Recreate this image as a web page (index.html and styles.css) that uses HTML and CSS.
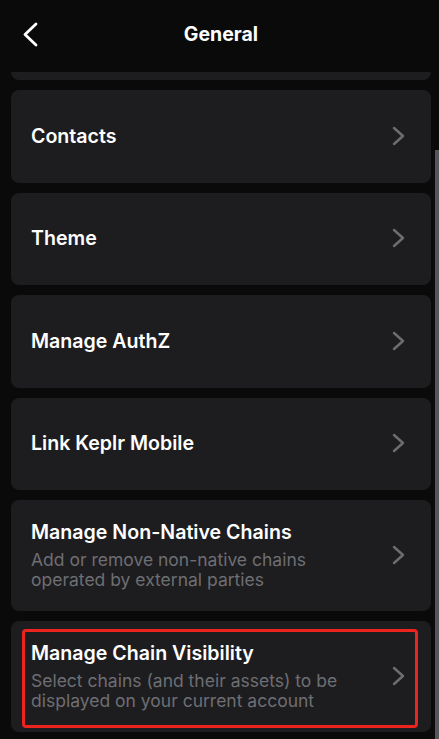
FILE: index.html
```html
<!DOCTYPE html>
<html>
<head>
    <title>General</title>
    <link rel="stylesheet" href="styles.css">
</head>
<body>
    <div class="page">
        <div class="header">
            <svg class="back" width="24" height="28" viewBox="0 0 24 28">
                <path d="M18 3 L7 13.5 L18 24" fill="none" stroke="#fff" stroke-width="2.8" stroke-linecap="round" stroke-linejoin="round"/>
            </svg>
            <h1>General</h1>
        </div>

        <div class="body">
            <div class="list">
                <!-- card above, scrolled out of view -->
                <div class="card card-hidden"></div>

                <div class="card">
                    <div class="text"><div class="title">Contacts</div></div>
                    <svg class="chev" width="20" height="20" viewBox="0 0 20 20"><path d="M5 2 L14 10 L5 18" fill="none" stroke="#6c6c71" stroke-width="2.5" stroke-linecap="round" stroke-linejoin="round"/></svg>
                </div>
                <div class="card">
                    <div class="text"><div class="title">Theme</div></div>
                    <svg class="chev" width="20" height="20" viewBox="0 0 20 20"><path d="M5 2 L14 10 L5 18" fill="none" stroke="#6c6c71" stroke-width="2.5" stroke-linecap="round" stroke-linejoin="round"/></svg>
                </div>
                <div class="card">
                    <div class="text"><div class="title">Manage AuthZ</div></div>
                    <svg class="chev" width="20" height="20" viewBox="0 0 20 20"><path d="M5 2 L14 10 L5 18" fill="none" stroke="#6c6c71" stroke-width="2.5" stroke-linecap="round" stroke-linejoin="round"/></svg>
                </div>
                <div class="card">
                    <div class="text"><div class="title">Link Keplr Mobile</div></div>
                    <svg class="chev" width="20" height="20" viewBox="0 0 20 20"><path d="M5 2 L14 10 L5 18" fill="none" stroke="#6c6c71" stroke-width="2.5" stroke-linecap="round" stroke-linejoin="round"/></svg>
                </div>
                <div class="card">
                    <div class="text">
                        <div class="title">Manage Non-Native Chains</div>
                        <div class="sub">Add or remove non-native chains<br>operated by external parties</div>
                    </div>
                    <svg class="chev" width="20" height="20" viewBox="0 0 20 20"><path d="M5 2 L14 10 L5 18" fill="none" stroke="#6c6c71" stroke-width="2.5" stroke-linecap="round" stroke-linejoin="round"/></svg>
                </div>
                <div class="card">
                    <div class="text">
                        <div class="title">Manage Chain Visibility</div>
                        <div class="sub">Select chains (and their assets) to be<br>displayed on your current account</div>
                    </div>
                    <svg class="chev" width="20" height="20" viewBox="0 0 20 20"><path d="M5 2 L14 10 L5 18" fill="none" stroke="#6c6c71" stroke-width="2.5" stroke-linecap="round" stroke-linejoin="round"/></svg>
                    <div class="highlight"></div>
                </div>
            </div>
            <div class="scrollbar"><div class="thumb"></div></div>
        </div>
    </div>
</body>
</html>
```

FILE: styles.css
```css
body {
    margin: 0;
    background: #0a0a0a;
    font-family: Inter, "Noto Sans", sans-serif;
    color: #fff;
}
.page {
    height: 739px;
    display: flex;
    flex-direction: column;
    overflow: hidden;
}
.header {
    height: 72px;
    flex: none;
    display: flex;
    align-items: center;
    justify-content: center;
    padding-left: 3px;
    position: relative;
    background: #0a0a0a;
    z-index: 1;
}
.header h1 {
    margin: 0 0 4px 0;
    font-size: 19.5px;
    font-weight: 700;
}
.back {
    position: absolute;
    left: 18px;
    top: 21px;
}
.body {
    flex: 1;
    display: flex;
    min-height: 0;
}
.list {
    flex: 1;
    padding: 0 2px 0 11px;
    display: flex;
    flex-direction: column;
    gap: 10px;
    overflow: hidden;
}
.card {
    flex: none;
    position: relative;
    background: #1d1d1f;
    border-radius: 8px;
    min-height: 92.5px;
    padding: 20px 22px 21px 20px;
    box-sizing: border-box;
    display: flex;
    align-items: center;
}
.card-hidden {
    margin-top: -84.5px;
}
.text {
    flex: 1;
}
.title {
    font-size: 19.6px;
    line-height: 24px;
    font-weight: 600;
}
.sub {
    margin-top: 6px;
    font-size: 17.5px;
    line-height: 20px;
    color: #6e6e73;
}
.chev {
    flex: none;
}
.highlight {
    position: absolute;
    left: 11px;
    right: 13px;
    top: 8px;
    bottom: 4px;
    border: 3px solid #ec2420;
    border-radius: 4px;
}
.scrollbar {
    width: 6px;
    flex: none;
    padding-top: 78px;
    display: flex;
    justify-content: flex-end;
}
.thumb {
    width: 4.5px;
    height: 100%;
    background: #55555a;
}
```
